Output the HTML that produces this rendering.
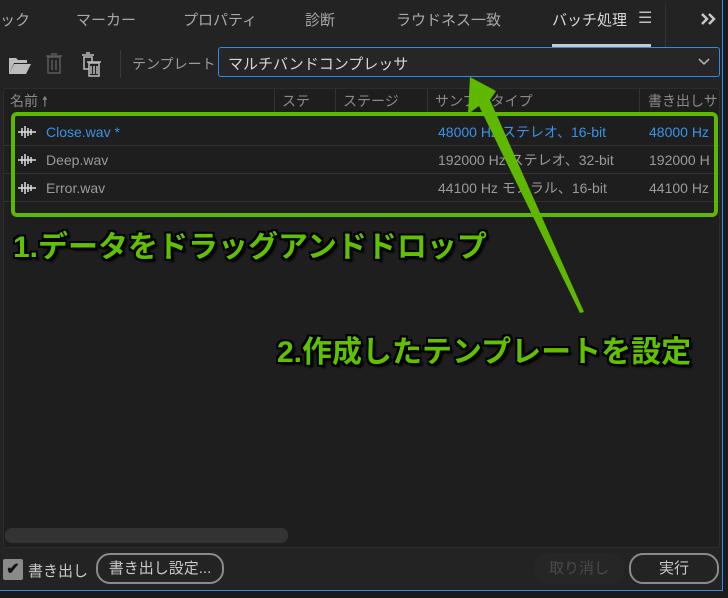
<!DOCTYPE html>
<html><head><meta charset="utf-8"><style>
*{margin:0;padding:0;box-sizing:border-box}
body{width:728px;height:598px;background:#1b1b1b;position:relative;overflow:hidden;font-family:"Liberation Sans","Noto Sans CJK JP",sans-serif;color:#9a9a9a;font-size:14px}
.panel{position:absolute;left:0;top:0;width:723px;height:591px;background:#232323;border-right:1px solid #2d8ceb;border-bottom:1px solid #2d8ceb}
.a{position:absolute;white-space:nowrap}
.tab{top:9px;font-size:15px;color:#a8a8a8}
.list{position:absolute;left:3px;top:88px;width:717px;height:460px;background:#1e1e1e;border:1px solid #2c2c2c;border-radius:3px}
.hd{font-size:14px;color:#8a8a8a;top:91px}
.row{position:absolute;left:4px;width:715px;height:28px;border-bottom:1px solid #333}
.rt{font-size:14px;top:0;line-height:28px}
.g{font-weight:bold;font-size:30px;color:#5fc100;text-shadow:-2px -2px 0 #000,2px -2px 0 #000,-2px 2px 0 #000,2px 2px 0 #000,0 2px 0 #000,0 -2px 0 #000,2px 0 0 #000,-2px 0 0 #000,3px 3px 2px #000}
.btn{position:absolute;border:2px solid #8a8a8a;border-radius:14px;height:31px;top:553px;text-align:center;line-height:27px;font-size:15px;color:#c8c8c8}
</style></head><body>
<div class="panel"></div>
<div class="a tab" style="left:0">ック</div>
<div class="a tab" style="left:76px">マーカー</div>
<div class="a tab" style="left:183px">プロパティ</div>
<div class="a tab" style="left:305px">診断</div>
<div class="a tab" style="left:396px">ラウドネス一致</div>
<div class="a tab" style="left:552px;color:#d8d8d8">バッチ処理</div>
<div class="a" style="left:638px;top:8px;font-size:16px;color:#c0c0c0">☰</div>
<div class="a" style="left:552px;top:44px;width:99px;height:3px;background:#c8c8c8"></div>
<div class="a" style="left:665px;top:4px;width:1px;height:44px;background:#333"></div>
<svg class="a" style="left:700px;top:12px" width="18" height="14"><path d="M2 2l5 5-5 5M9 2l5 5-5 5" stroke="#c8c8c8" stroke-width="2.5" fill="none"/></svg>
<svg class="a" style="left:6px;top:50px" width="110" height="30">
<path d="M3 8h7l2 2h9v3H8l-5 11z M3 24l5-10h17l-5 10z" fill="#bdbdbd"/>
<g fill="none" stroke="#5a5a5a" stroke-width="1.5"><rect x="42" y="7" width="12" height="16"/><path d="M40 6h16M45 4h6M46 10v10M50 10v10"/></g>
<g fill="none" stroke="#bdbdbd" stroke-width="1.5"><rect x="78" y="7" width="8" height="12"/><path d="M76 5h12M80 3h4"/><rect x="83" y="13" width="10" height="13" fill="#232323"/><path d="M81 12h14M85 16v8M88 16v8M91 16v8"/></g>
</svg>
<div class="a" style="left:120px;top:50px;width:1px;height:28px;background:#3a3a3a"></div>
<div class="a" style="left:132px;top:54px;font-size:14px;color:#9c9c9c">テンプレート :</div>
<div class="a" style="left:218px;top:47px;width:502px;height:30px;border:1px solid #2d8ceb;border-radius:3px;background:#262626"></div>
<div class="a" style="left:228px;top:53px;font-size:15px;color:#d6d6d6">マルチバンドコンプレッサ</div>
<svg class="a" style="left:698px;top:58px" width="12" height="8"><path d="M1 1l5 5 5-5" stroke="#bbb" stroke-width="1.5" fill="none"/></svg>
<div class="list"></div>
<div class="a hd" style="left:10px">名前 🠕</div>
<div class="a" style="left:274px;top:89px;width:1px;height:24px;background:#333"></div>
<div class="a hd" style="left:282px">ステ</div>
<div class="a" style="left:335px;top:89px;width:1px;height:24px;background:#333"></div>
<div class="a hd" style="left:343px">ステージ</div>
<div class="a" style="left:427px;top:89px;width:1px;height:24px;background:#333"></div>
<div class="a hd" style="left:435px">サンプルタイプ</div>
<div class="a" style="left:639px;top:89px;width:1px;height:24px;background:#333"></div>
<div class="a hd" style="left:648px">書き出しサ</div>
<div class="row" style="top:118px"><svg class="a" style="left:13px;top:7px" width="20" height="14"><path d="M1 7h18M5 3v8M8 1v12M11 3v8M14 4v6" stroke="#ddd" stroke-width="1.5"/></svg><span class="a rt" style="left:42px;color:#3b92e6">Close.wav *</span><span class="a rt" style="left:434px;color:#3b92e6">48000 Hz ステレオ、16-bit</span><span class="a rt" style="left:645px;color:#3b92e6">48000 Hz</span></div>
<div class="row" style="top:146px"><svg class="a" style="left:13px;top:7px" width="20" height="14"><path d="M1 7h18M5 3v8M8 1v12M11 3v8M14 4v6" stroke="#ddd" stroke-width="1.5"/></svg><span class="a rt" style="left:42px">Deep.wav</span><span class="a rt" style="left:434px">192000 Hz ステレオ、32-bit</span><span class="a rt" style="left:645px">192000 H</span></div>
<div class="row" style="top:174px"><svg class="a" style="left:13px;top:7px" width="20" height="14"><path d="M1 7h18M5 3v8M8 1v12M11 3v8M14 4v6" stroke="#ddd" stroke-width="1.5"/></svg><span class="a rt" style="left:42px">Error.wav</span><span class="a rt" style="left:434px">44100 Hz モノラル、16-bit</span><span class="a rt" style="left:645px">44100 Hz</span></div>
<div class="a" style="left:11px;top:112px;width:707px;height:105px;border:4px solid #5fb800;border-radius:6px"></div>
<div class="a g" style="left:13px;top:222px">1.データをドラッグアンドドロップ</div>
<div class="a g" style="left:277px;top:327px">2.作成したテンプレートを設定</div>
<svg class="a" style="left:0;top:0" width="728" height="598">
<polygon points="470,77 468,114 479,106 580,313 584,312 490,100 496,91" fill="#5fb800"/>
</svg>
<div class="a" style="left:5px;top:528px;width:283px;height:15px;border-radius:7px;background:#333"></div>
<div class="a" style="left:3px;top:559px;width:20px;height:21px;background:#8a8a8a;border-radius:2px;color:#111;font-size:16px;text-align:center;line-height:21px;font-weight:bold">✔</div>
<div class="a" style="left:28px;top:560px;font-size:15px;color:#c8c8c8">書き出し</div>
<div class="btn" style="left:96px;width:128px">書き出し設定...</div>
<div class="btn" style="left:534px;width:90px;border-color:#262626;background:#262626;color:#4a4a4a">取り消し</div>
<div class="btn" style="left:629px;width:90px">実行</div>
</body></html>
